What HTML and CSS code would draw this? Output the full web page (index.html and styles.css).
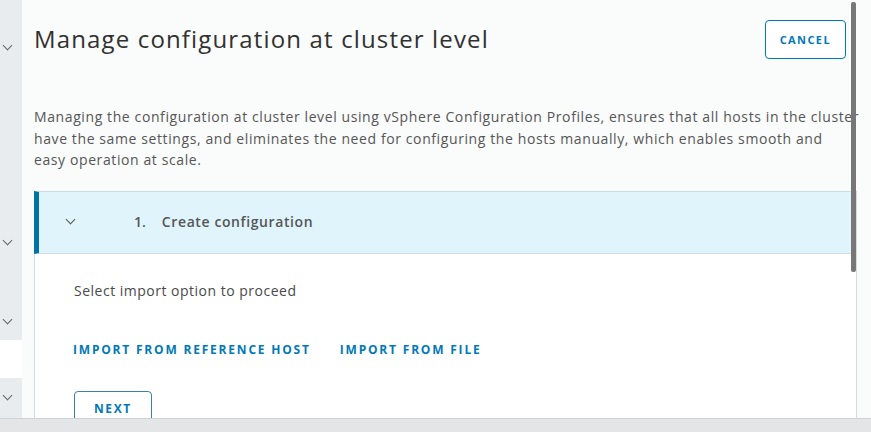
FILE: index.html
```html
<!DOCTYPE html>
<html lang="en">
<head>
    <meta charset="UTF-8">
    <title>Manage configuration at cluster level</title>
    <link rel="stylesheet" href="styles.css">
</head>
<body>
    <div class="app">
        <!-- collapsed side panels -->
        <div class="sidebar">
            <div class="side-block first"><span class="chev"></span></div>
            <div class="side-block second"><span class="chev"></span></div>
            <div class="side-block third"><span class="chev"></span></div>
            <div class="side-gap"></div>
            <div class="side-block fourth"><span class="chev"></span></div>
        </div>

        <div class="main">
            <div class="page-header">
                <h1>Manage configuration at cluster level</h1>
                <button class="btn">Cancel</button>
            </div>

            <p class="intro">Managing the configuration at cluster level using vSphere Configuration Profiles, ensures that all hosts in the cluster<br>have the same settings, and eliminates the need for configuring the hosts manually, which enables smooth and<br>easy operation at scale.</p>

            <div class="stepper">
                <div class="step-header">
                    <span class="chev step-chev"></span>
                    <span class="step-num">1.</span>
                    <span class="step-title">Create configuration</span>
                </div>
                <div class="step-body">
                    <p>Select import option to proceed</p>
                    <div class="links">
                        <a href="#">Import from reference host</a>
                        <a href="#">Import from file</a>
                    </div>
                    <button class="btn">Next</button>
                </div>
            </div>

            <div class="scroll-thumb"></div>
        </div>
    </div>
    <div class="footer-bar"></div>
</body>
</html>
```

FILE: styles.css
```css
body {
    margin: 0;
    font-family: "Open Sans", "Noto Sans", sans-serif;
    color: #565656;
    background-color: #fff;
    height: 432px;
    overflow: hidden;
}
.app {
    display: flex;
    height: 418px;
}
.sidebar {
    width: 22px;
    display: flex;
    flex-direction: column;
    flex-shrink: 0;
}
.side-block {
    background-color: #e9ecee;
    position: relative;
}
.side-block.first { height: 230px; }
.side-block.second { height: 80px; }
.side-block.third { height: 30px; }
.side-gap { height: 38px; }
.side-block.fourth { flex: 1; }
.side-block .chev {
    position: absolute;
    left: 4px;
}
.side-block.first .chev { top: 42px; }
.side-block.second .chev { top: 7px; }
.side-block.third .chev { top: 6px; }
.side-block.fourth .chev { top: 14px; }
.chev {
    display: inline-block;
    width: 6px;
    height: 6px;
    border-right: 1.5px solid #666;
    border-bottom: 1.5px solid #666;
    transform: rotate(45deg);
}
.main {
    flex: 1;
    position: relative;
    padding: 0 14px 0 12px;
    background-color: #fafbfb;
    overflow: hidden;
}
.page-header {
    display: flex;
    justify-content: space-between;
    align-items: flex-start;
    padding: 20px 11px 0 0;
}
h1 {
    margin: 3px 0 0;
    font-size: 24px;
    font-weight: 400;
    color: #313131;
    line-height: 32px;
    letter-spacing: 1.15px;
}
.btn {
    font-family: inherit;
    font-size: 11px;
    font-weight: 700;
    letter-spacing: 1.4px;
    text-transform: uppercase;
    color: #0079b8;
    background-color: #fff;
    border: 1px solid #0079b8;
    border-radius: 4px;
    height: 39px;
    padding: 0 14px;
}
.intro {
    margin: 47px 0 0;
    font-size: 14px;
    line-height: 21.5px;
    color: #565656;
    letter-spacing: 0.6px;
    white-space: nowrap;
}
.stepper {
    margin-top: 20px;
    border-right: 1px solid #d7dadc;
    background-color: #fff;
}
.step-header {
    display: flex;
    align-items: center;
    height: 61px;
    background-color: #e0f4fc;
    border-top: 1px solid #cfdde3;
    border-bottom: 1px solid #cfdde3;
    border-left: 5px solid #0072a3;
    font-size: 14px;
}
.step-chev {
    margin: 0 0 6px 28px;
    border-color: #555;
}
.step-num {
    margin-left: 60px;
    margin-bottom: 2px;
    font-weight: 600;
    color: #565656;
}
.step-title {
    margin-left: 16px;
    margin-bottom: 2px;
    font-weight: 600;
    color: #565656;
    letter-spacing: 0.6px;
}
.step-body {
    border-left: 1px solid #d7dadc;
    padding: 26px 39px 40px;
    font-size: 14px;
}
.step-body p {
    margin: 0;
    line-height: 21px;
    color: #4a4a4a;
    letter-spacing: 0.5px;
}
.links {
    display: flex;
    gap: 29px;
    margin: 40px 0 33px -1px;
}
.links a {
    font-size: 12px;
    font-weight: 700;
    letter-spacing: 1.8px;
    text-transform: uppercase;
    color: #0079b8;
    text-decoration: none;
}
.step-body .btn {
    height: 36px;
    padding: 0 19px;
    font-size: 12px;
    letter-spacing: 1.6px;
    border-color: #3d7fa6;
}
.scroll-thumb {
    position: absolute;
    top: 2px;
    right: 15px;
    width: 5px;
    height: 270px;
    border-radius: 2px;
    background-color: #777;
}
.footer-bar {
    height: 14px;
    background-color: #e3e5e6;
    border-top: 1px solid #d0d3d5;
    box-sizing: border-box;
}
```
